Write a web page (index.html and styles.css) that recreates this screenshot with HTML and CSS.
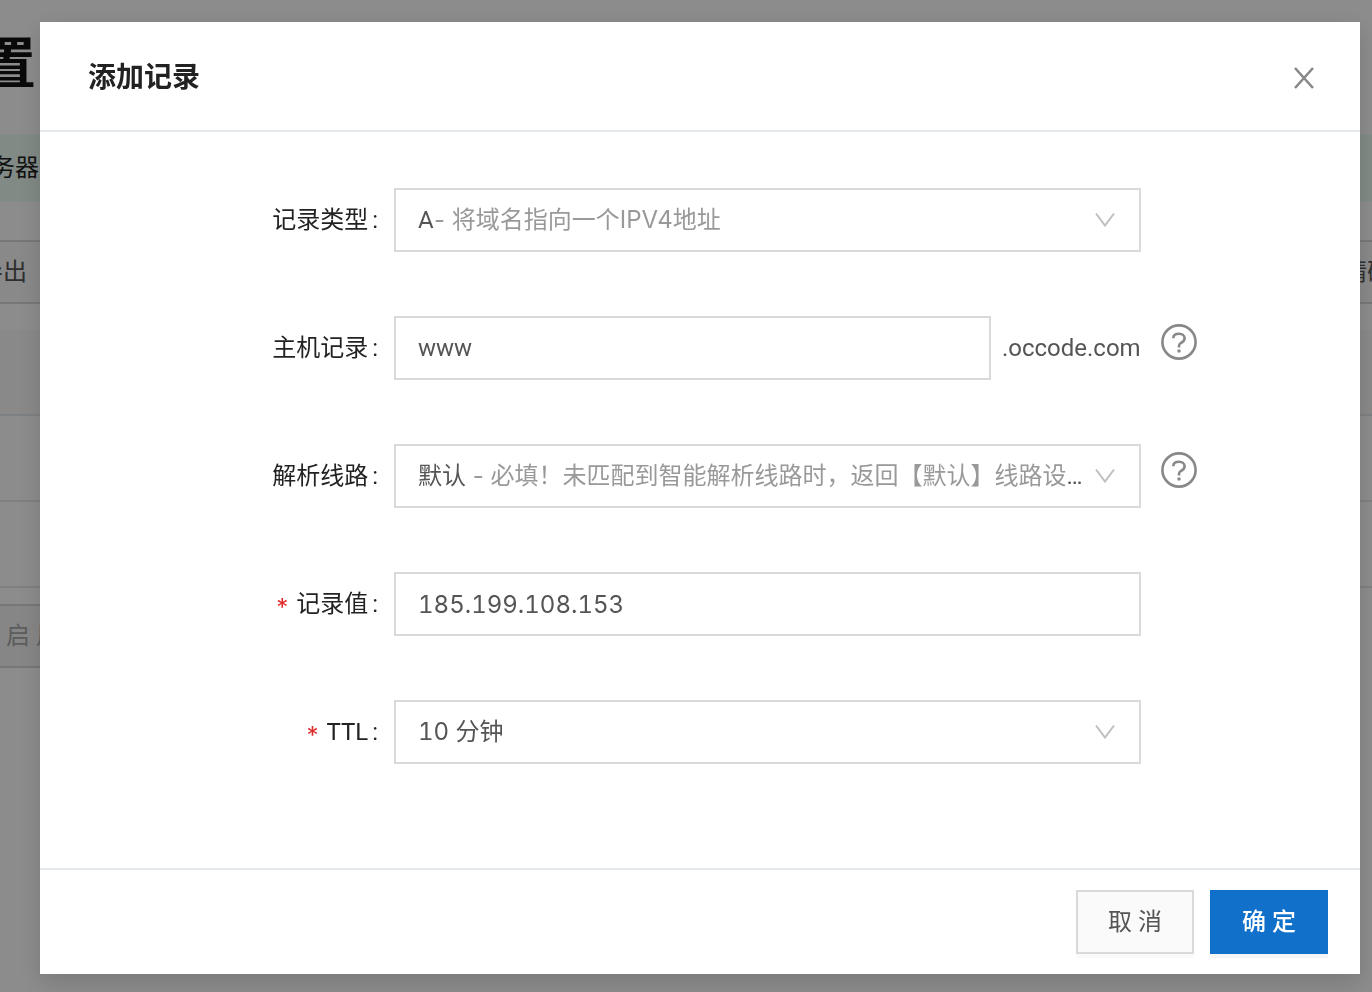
FILE: index.html
```html
<!DOCTYPE html>
<html lang="zh-CN">
<head>
    <meta charset="UTF-8">
    <meta name="viewport" content="width=device-width, initial-scale=1.0">
    <title>添加记录</title>
    <link rel="stylesheet" href="styles.css">
</head>
<body>

    <div class="page">
        <h1 class="page-title">置</h1>
        <div class="notice"><span>务器</span></div>
        <div class="toolbar">
            <button type="button" class="export">导出</button>
            <button type="button" class="match">精确</button>
        </div>
        <div class="records">
            <div class="records-head"></div>
            <div class="records-row"></div>
            <div class="records-row"></div>
        </div>
        <button type="button" class="batch" disabled>启 用</button>
    </div>

    <div class="mask">
        <form class="modal" role="dialog" aria-labelledby="modalTitle">
            <div class="modal-header">
                <h2 id="modalTitle">添加记录</h2>
                <button type="button" class="close" aria-label="关闭">
                    <svg width="24" height="24" viewBox="0 0 24 24"><path d="M3 2L21 22M21 2L3 22" /></svg>
                </button>
            </div>

            <div class="modal-body">
                <div class="form-row">
                    <label for="recordType">记录类型<span class="colon">:</span></label>
                    <div class="select-box">
                        <div class="select-text">
                            <select id="recordType"><option>A</option></select><span class="hint">- 将域名指向一个IPV4地址</span>
                        </div>
                        <svg class="arrow" width="20" height="24" viewBox="2 0 20 24"><path d="M3 5.5L12 17.5L21 5.5" /></svg>
                    </div>
                </div>

                <div class="form-row">
                    <label for="host">主机记录<span class="colon">:</span></label>
                    <div class="host-box">
                        <input type="text" id="host" name="host" value="www">
                        <span class="suffix">.occode.com</span>
                    </div>
                    <button type="button" class="help" aria-label="帮助">
                        <svg width="36" height="36" viewBox="0 0 36 36">
                            <circle cx="18" cy="18" r="16.6" />
                            <path d="M12.3 14.3C12.3 11.3 14.8 9.7 18 9.7C21.2 9.7 23.6 11.5 23.6 14.3C23.6 16.8 21.7 18.1 19.9 19C18.6 19.8 18 20.5 18 22V23.5" />
                            <circle class="dot" cx="18" cy="27" r="1.7" />
                        </svg>
                    </button>
                </div>

                <div class="form-row">
                    <label for="line">解析线路<span class="colon">:</span></label>
                    <div class="select-box">
                        <div class="select-text">
                            <select id="line"><option>默认</option></select><span class="hint"> - 必填！未匹配到智能解析线路时，返回【默认】线路设置结果</span>
                        </div>
                        <svg class="arrow" width="20" height="24" viewBox="2 0 20 24"><path d="M3 5.5L12 17.5L21 5.5" /></svg>
                    </div>
                    <button type="button" class="help" aria-label="帮助">
                        <svg width="36" height="36" viewBox="0 0 36 36">
                            <circle cx="18" cy="18" r="16.6" />
                            <path d="M12.3 14.3C12.3 11.3 14.8 9.7 18 9.7C21.2 9.7 23.6 11.5 23.6 14.3C23.6 16.8 21.7 18.1 19.9 19C18.6 19.8 18 20.5 18 22V23.5" />
                            <circle class="dot" cx="18" cy="27" r="1.7" />
                        </svg>
                    </button>
                </div>

                <div class="form-row">
                    <label for="recordValue"><span class="required">*</span>记录值<span class="colon">:</span></label>
                    <input type="text" id="recordValue" class="numeric" name="value" value="185.199.108.153" required>
                </div>

                <div class="form-row">
                    <label for="ttl"><span class="required">*</span>TTL<span class="colon">:</span></label>
                    <div class="select-box">
                        <div class="select-text">
                            <select id="ttl" class="numeric"><option>10 分钟</option></select>
                        </div>
                        <svg class="arrow" width="20" height="24" viewBox="2 0 20 24"><path d="M3 5.5L12 17.5L21 5.5" /></svg>
                    </div>
                </div>
            </div>

            <div class="modal-footer">
                <button type="button" class="btn">取 消</button>
                <button type="submit" class="btn btn-primary">确 定</button>
            </div>
        </form>
    </div>

</body>
</html>
```

FILE: styles.css
```css
* {
    box-sizing: border-box;
}

body {
    margin: 0;
    background: #fff;
    color: #222;
    font-family: Roboto, "Noto Sans CJK SC", sans-serif;
    font-size: 24px;
    line-height: 36px;
    overflow: hidden;
}

button, input, select {
    font: inherit;
    color: #555;
    border-radius: 0;
}

/* page behind the dialog */
.page-title {
    display: flex;
    justify-content: flex-end;
    width: 36px;
    margin: 0;
    padding: 24px 0 30px;
    overflow: hidden;
    font-size: 56px;
    line-height: 80px;
    color: #111;
}

.notice {
    display: flex;
    height: 68px;
    align-items: center;
    background: #ebfbf2;
}

.notice span {
    display: flex;
    justify-content: flex-end;
    width: 39px;
    white-space: nowrap;
    overflow: hidden;
}

.toolbar {
    display: flex;
    justify-content: space-between;
    height: 64px;
    margin: 38px 0 26px;
    border: solid #d9d9d9;
    border-width: 2px 0;
    background: #fafafa;
}

.toolbar button {
    display: flex;
    align-items: center;
    padding: 0;
    border: 0;
    background: none;
    white-space: nowrap;
    overflow: hidden;
}

.toolbar .export {
    justify-content: flex-end;
    width: 27px;
}

.toolbar .match {
    width: 29px;
}

.records-head,
.records-row {
    height: 86px;
    border-bottom: 2px solid #e4e9ed;
}

.records-head {
    background: #fafafa;
}

.batch {
    display: block;
    height: 64px;
    margin-top: 16px;
    padding: 0 32px 0 6px;
    border: solid #d9d9d9;
    border-width: 2px 2px 2px 0;
    background: #f5f5f5;
    color: #aaa;
}

/* dialog */
.mask {
    position: fixed;
    inset: 0;
    padding: 22px 12px 18px 40px;
    background: rgba(0, 0, 0, .45);
}

.modal {
    background: #fff;
    box-shadow: 0 8px 24px rgba(0, 0, 0, .15);
}

.modal-header {
    display: flex;
    justify-content: space-between;
    align-items: center;
    padding: 34px 44px 30px 48px;
    border-bottom: 2px solid #e4e9ed;
}

.modal-header h2 {
    margin: 0;
    font-size: 28px;
    line-height: 44px;
    font-weight: 600;
}

.close,
.help {
    display: flex;
    padding: 0;
    border: 0;
    background: none;
    cursor: pointer;
}

.close svg {
    fill: none;
    stroke: #888;
    stroke-width: 2.6;
}

.modal-body {
    padding: 56px 48px 104px;
}

.form-row {
    display: grid;
    grid-template-columns: 25% 61% auto;
    align-items: center;
    min-height: 64px;
}

.form-row + .form-row {
    margin-top: 64px;
}

.form-row label {
    text-align: right;
    padding-right: 16px;
}

.colon {
    margin-left: 4px;
}

.required {
    margin-right: 8px;
    color: #e02b2b;
    font-family: Inter, sans-serif;
    line-height: 24px;
    vertical-align: -4px;
}

input[type="text"],
.select-box {
    width: 100%;
    height: 64px;
    padding: 0 24px 0 22px;
    border: 2px solid #d9d9d9;
    background: #fff;
}

.select-box {
    display: flex;
    align-items: center;
    gap: 6px;
}

.select-text {
    flex: 1;
    overflow: hidden;
    white-space: nowrap;
    text-overflow: ellipsis;
    color: #555;
}

select {
    appearance: none;
    padding: 0;
    border: 0;
    background: none;
    color: #555;
}

.hint {
    color: #999;
    font-family: Inter, "Noto Sans CJK SC", sans-serif;
}

.numeric {
    font-family: Inter, "Noto Sans CJK SC", sans-serif;
    font-variant-numeric: tabular-nums;
}

.arrow {
    flex: none;
    fill: none;
    stroke: #bfbfbf;
    stroke-width: 2;
}

.host-box {
    display: flex;
    align-items: center;
    justify-content: space-between;
}

.host-box input[type="text"] {
    width: 80%;
}

.suffix {
    color: #555;
}

.help {
    align-self: start;
    margin: 8px 0 0 20px;
}

.help svg {
    fill: none;
    stroke: #888;
    stroke-width: 2.6;
}

.help .dot {
    fill: #888;
    stroke: none;
}

.modal-footer {
    display: flex;
    justify-content: flex-end;
    gap: 16px;
    padding: 20px 32px;
    border-top: 2px solid #e4e9ed;
}

.btn {
    width: 118px;
    height: 64px;
    border: 2px solid #d9d9d9;
    background: #fafafa;
    box-shadow: 0 4px 0 rgba(0, 0, 0, .02);
    cursor: pointer;
}

.btn-primary {
    border-color: #1070ca;
    background: #1070ca;
    box-shadow: 0 4px 0 rgba(0, 0, 0, .04);
    color: #fff;
    font-weight: 500;
}
```
